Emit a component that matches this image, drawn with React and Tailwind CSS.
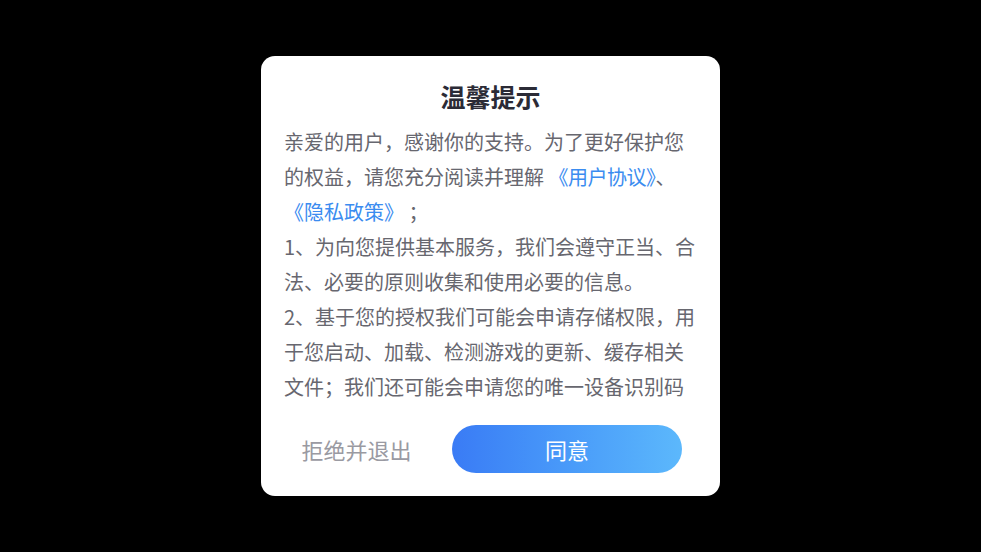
import React from 'react';

const font = { fontFamily: '"Noto Sans CJK SC", "Noto Sans", sans-serif' };

export default function App() {
  return (
    <div className="w-[981px] h-[552px] bg-black flex items-center justify-center" style={font}>
      <div className="w-[459px] h-[440px] bg-white rounded-[14px] flex flex-col">
        <h2 className="pt-[22px] text-center text-[25px] leading-[36px] font-bold text-[#2b2b36]">温馨提示</h2>

        <div className="mt-[10px] mx-[23px] h-[280px] overflow-hidden text-[20px] leading-[35px] text-[#67676f]">
          <p>
            亲爱的用户，感谢你的支持。为了更好保护您的权益，请您充分阅读并理解{' '}
            <span className="text-[#3b8cf0] tracking-[-0.5px]">《用户协议》</span>、
            <span className="text-[#3b8cf0]">《隐私政策》</span> ；
          </p>
          <p>1、为向您提供基本服务，我们会遵守正当、合法、必要的原则收集和使用必要的信息。</p>
          <p>2、基于您的授权我们可能会申请存储权限，用于您启动、加载、检测游戏的更新、缓存相关文件；我们还可能会申请您的唯一设备识别码</p>
        </div>

        <div className="mt-[21px] flex items-center pl-[23px]">
          <button className="w-[145px] text-center text-[22px] text-[#9a9aa2] leading-[48px]">拒绝并退出</button>
          <button className="ml-[23px] w-[230px] h-[48px] rounded-full bg-gradient-to-r from-[#3a7bf5] to-[#5cb8fc] text-white text-[22px]">
            同意
          </button>
        </div>
      </div>
    </div>
  );
}
